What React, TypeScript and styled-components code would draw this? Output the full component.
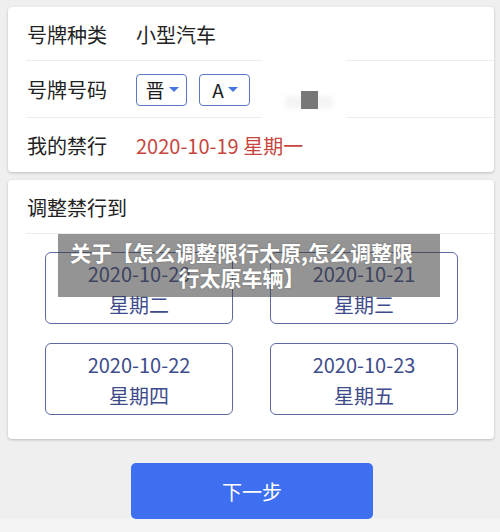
import React from "react";
import styled, { createGlobalStyle } from "styled-components";

const GlobalStyle = createGlobalStyle`
  html, body {
    margin: 0;
    padding: 0;
    background: #efefef;
  }
  body {
    font-family: "Noto Sans CJK SC", "Noto Sans", sans-serif;
    color: #222;
  }
`;

const Page = styled.div`
  position: relative;
  width: 500px;
  height: 532px;
  overflow: hidden;
  display: flex;
  flex-direction: column;
  padding: 7px 6px 0 8px;
  box-sizing: border-box;
`;

const Card = styled.div`
  background: #fff;
  border-radius: 4px;
  box-shadow: 0 1px 3px rgba(0, 0, 0, 0.22);
`;

const InfoCard = styled(Card)`
  display: flex;
  flex-direction: column;
`;

const Row = styled.div<{ $h: number; $divider?: boolean }>`
  height: ${(p) => p.$h}px;
  display: flex;
  align-items: center;
  padding-left: 19px;
  margin-left: ${(p) => (p.$divider ? 0 : 0)}px;
  box-sizing: border-box;
  position: relative;
  ${(p) =>
    p.$divider
      ? `&::after {
    content: "";
    position: absolute;
    left: 18px;
    right: 0;
    bottom: 0;
    height: 1px;
    background: #ececec;
  }`
      : ""}
`;

const Label = styled.span`
  width: 109px;
  font-size: 20px;
  color: #222;
`;

const Value = styled.span<{ $red?: boolean }>`
  font-size: 20px;
  color: ${(p) => (p.$red ? "#c6463e" : "#222")};
`;

const SelectGroup = styled.div`
  display: flex;
  gap: 12px;
`;

const Select = styled.div`
  width: 51px;
  height: 32px;
  box-sizing: border-box;
  border: 1px solid #5b78c0;
  border-radius: 4px;
  display: flex;
  align-items: center;
  justify-content: center;
  gap: 4px;
  font-size: 19px;
  color: #1c1c1c;
  padding-left: 1px;
`;

const Caret = styled.span`
  width: 0;
  height: 0;
  border-left: 5px solid transparent;
  border-right: 5px solid transparent;
  border-top: 5px solid #4677e0;
`;

const PickCard = styled(Card)`
  margin-top: 8px;
  height: 259px;
  display: flex;
  flex-direction: column;
`;

const Title = styled(Row)`
  font-size: 20px;
  flex-shrink: 0;
`;

const DayGrid = styled.div`
  display: grid;
  grid-template-columns: 188px 188px;
  column-gap: 37px;
  row-gap: 19px;
  padding: 18px 0 0 37px;
`;

const DayTile = styled.div`
  height: 72px;
  box-sizing: border-box;
  border: 1px solid #5c69a3;
  border-radius: 6px;
  display: flex;
  flex-direction: column;
  align-items: center;
  padding-top: 5px;
  color: #3e4c8c;
  font-size: 20px;
  line-height: 31px;
`;

const NextButton = styled.button`
  align-self: center;
  margin: 24px 0 0 2px;
  width: 242px;
  height: 56px;
  border: none;
  border-radius: 5px;
  background: #3d6ff0;
  color: #fff;
  font-family: inherit;
  font-size: 20px;
`;

const Footer = styled.div`
  margin: 0 -6px 0 -8px;
  flex: 1;
  background: #f4f4f4;
`;

/* smudged patch sitting over the plate number row */
const Patch = styled.div`
  position: absolute;
  left: 262px;
  top: 57px;
  width: 84px;
  height: 64px;
  background: #fff;
  filter: blur(1px);
`;

const Smudge = styled.div`
  position: absolute;
  left: 285px;
  top: 96px;
  width: 48px;
  height: 12px;
  background: #f4f4f4;
  filter: blur(2px);
`;

const Block = styled.div`
  position: absolute;
  left: 301px;
  top: 91px;
  width: 17px;
  height: 18px;
  background: #777;
`;

const Banner = styled.div`
  position: absolute;
  left: 58px;
  top: 234px;
  width: 382px;
  height: 63px;
  box-sizing: border-box;
  padding: 6px 26px 7px 11px;
  background: rgba(60, 60, 60, 0.55);
  color: #fff;
  font-size: 21px;
  font-weight: 700;
  line-height: 25px;
  text-align: center;
  text-shadow: 0 0 2px rgba(0, 0, 0, 0.25);
`;

const days = [
  { date: "2020-10-20", week: "星期二" },
  { date: "2020-10-21", week: "星期三" },
  { date: "2020-10-22", week: "星期四" },
  { date: "2020-10-23", week: "星期五" },
];

export default function App() {
  return (
    <>
      <GlobalStyle />
      <Page>
        <InfoCard>
          <Row $h={54} $divider>
            <Label>号牌种类</Label>
            <Value>小型汽车</Value>
          </Row>
          <Row $h={57} $divider>
            <Label>号牌号码</Label>
            <SelectGroup>
              <Select>
                晋<Caret />
              </Select>
              <Select>
                A<Caret />
              </Select>
            </SelectGroup>
          </Row>
          <Row $h={54}>
            <Label>我的禁行</Label>
            <Value $red>2020-10-19 星期一</Value>
          </Row>
        </InfoCard>

        <PickCard>
          <Title $h={54} $divider>
            调整禁行到
          </Title>
          <DayGrid>
            {days.map((d) => (
              <DayTile key={d.date}>
                <span>{d.date}</span>
                <span>{d.week}</span>
              </DayTile>
            ))}
          </DayGrid>
        </PickCard>

        <NextButton>下一步</NextButton>
        <Footer />

        <Patch />
        <Smudge />
        <Block />
        <Banner>关于【怎么调整限行太原,怎么调整限行太原车辆】</Banner>
      </Page>
    </>
  );
}
